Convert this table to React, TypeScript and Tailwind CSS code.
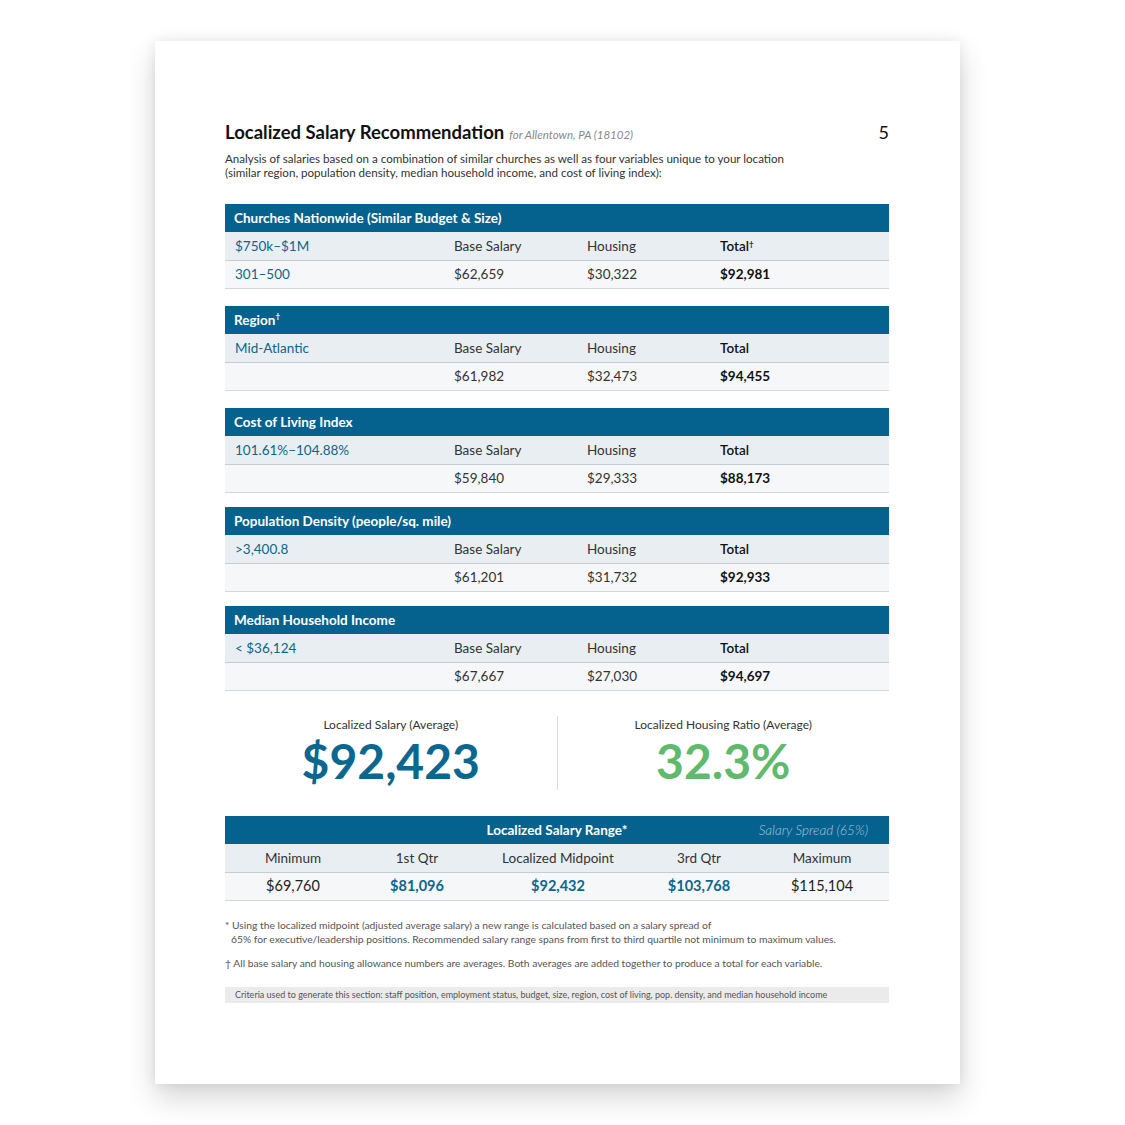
import React from "react";

const BLUE = "text-[#0b6690]";

type Block = {
  title: React.ReactNode;
  label: string;
  base: string;
  housing: string;
  total: string;
  sub?: string;
  dagger?: boolean;
  gap: string;
};

const blocks: Block[] = [
  { title: "Churches Nationwide (Similar Budget & Size)", label: "$750k–$1M", sub: "301–500", base: "$62,659", housing: "$30,322", total: "$92,981", dagger: true, gap: "" },
  { title: <>Region<sup className="text-[8px] align-super">†</sup></>, label: "Mid-Atlantic", base: "$61,982", housing: "$32,473", total: "$94,455", gap: "mt-[17px]" },
  { title: "Cost of Living Index", label: "101.61%–104.88%", base: "$59,840", housing: "$29,333", total: "$88,173", gap: "mt-[17px]" },
  { title: "Population Density (people/sq. mile)", label: ">3,400.8", base: "$61,201", housing: "$31,732", total: "$92,933", gap: "mt-[14px]" },
  { title: "Median Household Income", label: "< $36,124", base: "$67,667", housing: "$27,030", total: "$94,697", gap: "mt-[14px]" },
];

function Table({ b }: { b: Block }) {
  return (
    <div className={b.gap}>
      <div className="h-[28px] bg-[#05618d] flex items-center pl-[9px] text-white text-[13.5px] font-bold">
        {b.title}
      </div>
      <div className="h-[29px] bg-[#e9eef2] border-b border-[#c5ccd2] grid grid-cols-[229px_133px_133px_1fr] items-center text-[13.5px]">
        <span className={`pl-[10px] ${BLUE}`}>{b.label}</span>
        <span className="text-[#333]">Base Salary</span>
        <span className="text-[#333]">Housing</span>
        <span className="text-[#111] font-semibold">
          Total{b.dagger ? <sup className="text-[8px]">†</sup> : null}
        </span>
      </div>
      <div className="h-[28px] bg-[#f5f7f9] border-b border-[#d3d8dc] grid grid-cols-[229px_133px_133px_1fr] items-center text-[13.5px]">
        <span className={`pl-[10px] ${BLUE}`}>{b.sub ?? ""}</span>
        <span className="text-[#333]">{b.base}</span>
        <span className="text-[#333]">{b.housing}</span>
        <span className="text-[#111] font-bold">{b.total}</span>
      </div>
    </div>
  );
}

export default function App() {
  return (
    <div className="w-[1125px] h-[1125px] bg-white pt-[41px] pl-[155px]" style={{ fontFamily: "Lato, 'Open Sans', sans-serif" }}>
      <div className="w-[805px] h-[1043px] bg-white shadow-[0_14px_28px_rgba(0,0,0,0.16),0_0_12px_rgba(0,0,0,0.08)] pt-[78px] pl-[70px] pr-[71px]">
        <div className="flex items-baseline justify-between">
          <div className="flex items-baseline gap-[5px]">
            <h1 className="text-[18.5px] font-bold text-[#111]">Localized Salary Recommendation</h1>
            <span className="text-[11.5px] italic text-[#888]">for Allentown, PA (18102)</span>
          </div>
          <span className="text-[18px] text-[#111]">5</span>
        </div>
        <p className="mt-[5px] text-[11.6px] leading-[14px] text-[#333] w-[575px]">
          Analysis of salaries based on a combination of similar churches as well as four variables unique to your location (similar region, population density, median household income, and cost of living index):
        </p>

        <div className="mt-[24px]">
          {blocks.map((b, i) => (
            <Table key={i} b={b} />
          ))}
        </div>

        <div className="mt-[25px] flex h-[74px]">
          <div className="flex-1 flex flex-col items-center">
            <span className="text-[12px] text-[#333]">Localized Salary (Average)</span>
            <span className="text-[48px] leading-[52px] font-bold text-[#0b6690] mt-[1px]">$92,423</span>
          </div>
          <div className="w-px bg-[#dcdcdc]" />
          <div className="flex-1 flex flex-col items-center">
            <span className="text-[12px] text-[#333]">Localized Housing Ratio (Average)</span>
            <span className="text-[48px] leading-[52px] font-bold text-[#5fba6b] mt-[1px]">32.3%</span>
          </div>
        </div>

        <div className="mt-[26px]">
          <div className="h-[28px] bg-[#05618d] relative flex items-center justify-center text-white text-[13.5px] font-bold">
            Localized Salary Range*
            <span className="absolute right-[21px] text-[13.5px] font-light italic text-[#a9c8da]">Salary Spread (65%)</span>
          </div>
          <div className="h-[29px] bg-[#e9eef2] border-b border-[#c5ccd2] grid grid-cols-[136px_112px_170px_112px_1fr] items-center text-center text-[13.5px] text-[#333]">
            <span>Minimum</span>
            <span>1st Qtr</span>
            <span>Localized Midpoint</span>
            <span>3rd Qtr</span>
            <span>Maximum</span>
          </div>
          <div className="h-[28px] bg-[#f5f7f9] border-b border-[#d3d8dc] grid grid-cols-[136px_112px_170px_112px_1fr] items-center text-center text-[14.5px]">
            <span className="text-[#222]">$69,760</span>
            <span className={`${BLUE} font-bold`}>$81,096</span>
            <span className={`${BLUE} font-bold`}>$92,432</span>
            <span className={`${BLUE} font-bold`}>$103,768</span>
            <span className="text-[#222]">$115,104</span>
          </div>
        </div>

        <div className="mt-[17px] text-[10.3px] leading-[14px] text-[#555]">
          <p>
            * Using the localized midpoint (adjusted average salary) a new range is calculated based on a salary spread of
            <br />
            <span className="pl-[6px]">65% for executive/leadership positions. Recommended salary range spans from first to third quartile not minimum to maximum values.</span>
          </p>
          <p className="mt-[10px]">† All base salary and housing allowance numbers are averages. Both averages are added together to produce a total for each variable.</p>
        </div>

        <div className="mt-[17px] h-[16px] bg-[#ebebeb] flex items-center pl-[10px] text-[9px] text-[#555]">
          Criteria used to generate this section: staff position, employment status, budget, size, region, cost of living, pop. density, and median household income
        </div>
      </div>
    </div>
  );
}
